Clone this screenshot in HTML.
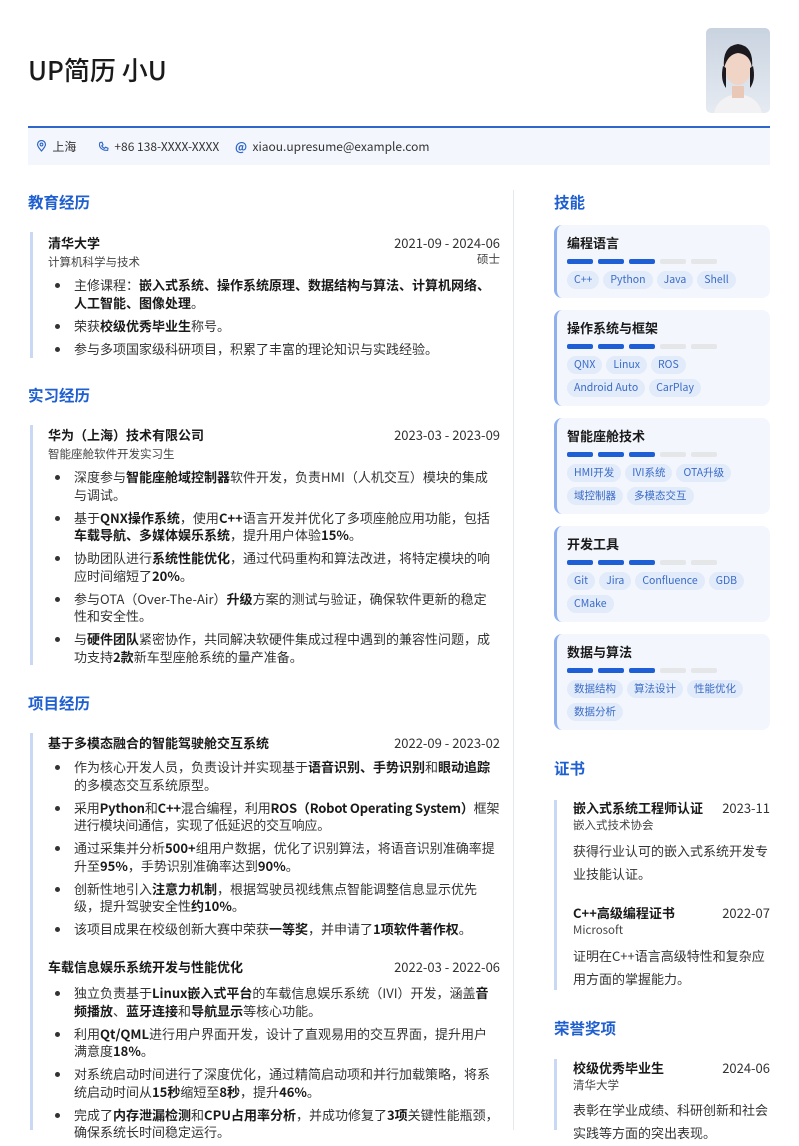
<!DOCTYPE html>
<html><head><meta charset="utf-8">
<style>
*{margin:0;padding:0;box-sizing:border-box}
body{width:799px;height:1130px;overflow:hidden;background:#fff;font-family:"Noto Sans CJK SC","Liberation Sans",sans-serif;color:#333;position:relative}
.a{position:absolute}
.name{left:28px;top:53px;font-size:26px;color:#1a1a1a;line-height:34px;font-weight:500}
.photo{left:706px;top:28px;width:64px;height:85px;border-radius:5px;background:linear-gradient(180deg,#c9d3e0,#e6ebf2);overflow:hidden}
.line{left:28px;top:126px;width:742px;height:2px;background:#2f66c9}
.contact{left:28px;top:128px;width:742px;height:37px;background:#f3f6fc;font-size:12px;color:#333;line-height:37px}
.contact>span{position:absolute;top:0}
.sec{font-size:15.5px;color:#1f5fcf;font-weight:bold;line-height:20px}
.vdiv{left:513px;top:190px;width:1px;height:940px;background:#e6e8ec}
.bar{width:3px;background:#c9d8f5}
.h{font-size:13px;font-weight:bold;color:#1a1a1a;line-height:18px}
.d{font-size:13px;color:#333;line-height:18px;text-align:right}
.s{font-size:11.5px;color:#444;line-height:16px}
ul{list-style:none}
li{position:relative;font-size:13px;line-height:17.5px;color:#333;white-space:nowrap;margin-bottom:5.5px}
li:before{content:"";position:absolute;left:-19px;top:7px;width:5px;height:5px;border-radius:50%;background:#333}
b{color:#1a1a1a}
.card{left:554px;width:216px;background:#f3f6fd;border-radius:8px;border-left:3px solid #8eb0ee}
.ct{position:absolute;left:10px;top:9px;font-size:13px;font-weight:bold;color:#1a1a1a;line-height:18px}
.lv{position:absolute;left:10px;top:34px;height:5px}
.lv i{display:inline-block;width:26px;height:5px;margin-right:5px;border-radius:2px;background:#e5e6e8;vertical-align:top}
.lv i.on{background:#1f5fd6}
.tags{position:absolute;left:10px;top:46px;width:200px;line-height:0}
.tags span{display:inline-block;font-size:10.5px;color:#3a6bc7;background:#e2ebfa;border-radius:9px;height:18px;line-height:18px;padding:0 7px;margin:0 4px 5px 0}
.cd{font-size:13px;color:#333;line-height:23px}
</style></head><body>

<div class="a name">UP简历 小U</div>
<div class="a photo"><svg width="64" height="85" viewBox="0 0 64 85"><path d="M8 85 Q12 68 32 66 Q52 68 56 85Z" fill="#f2f2f4"/><path d="M26 58 L38 58 L38 70 L26 70Z" fill="#e9c8b8"/><ellipse cx="32" cy="40" rx="13" ry="17" fill="#f0d4c6"/><path d="M18 40 Q16 18 32 16 Q48 18 46 40 Q44 26 32 25 Q22 26 18 40Z" fill="#1c1a1e"/><path d="M17 38 Q14 52 20 60 L20 40Z" fill="#1c1a1e"/><path d="M47 38 Q50 52 44 60 L44 40Z" fill="#1c1a1e"/></svg></div>
<div class="a line"></div>
<div class="a contact">
<span style="left:8px"><svg width="11" height="12" viewBox="0 0 11 12" style="vertical-align:-1px"><path d="M5.5 11 C2 7 1.5 5.5 1.5 4.5 A4 4 0 0 1 9.5 4.5 C9.5 5.5 9 7 5.5 11Z" fill="none" stroke="#2f66c9" stroke-width="1.2"/><circle cx="5.5" cy="4.5" r="1.4" fill="none" stroke="#2f66c9" stroke-width="1.1"/></svg>&nbsp; 上海</span>
<span style="left:70px"><svg width="11" height="11" viewBox="0 0 11 11" style="vertical-align:-1px"><path d="M2 1.5 L4 1.2 L5 3.8 L3.8 4.8 Q5 7 6.5 7.4 L7.5 6.2 L10 7.2 L9.7 9.3 Q5 9.8 2.3 6.5 Q0.8 4 2 1.5Z" fill="none" stroke="#2f66c9" stroke-width="1.1"/></svg>&nbsp; +86 138-XXXX-XXXX</span>
<span style="left:207px"><b style="color:#2f66c9">@</b>&nbsp; xiaou.upresume@example.com</span>
</div>

<div class="a vdiv"></div>

<div class="a sec" style="left:28px;top:192px">教育经历</div>
<div class="a bar" style="left:30px;top:232px;height:126px"></div>
<div class="a h" style="left:48px;top:234px">清华大学</div>
<div class="a d" style="right:299px;top:234px">2021-09 - 2024-06</div>
<div class="a s" style="left:48px;top:254px">计算机科学与技术</div>
<div class="a s" style="right:299px;top:251px">硕士</div>
<ul class="a" style="left:74px;top:276px">
<li>主修课程：<b>嵌入式系统、操作系统原理、数据结构与算法、计算机网络、<br>人工智能、图像处理</b>。</li>
<li>荣获<b>校级优秀毕业生</b>称号。</li>
<li>参与多项国家级科研项目，积累了丰富的理论知识与实践经验。</li>
</ul>

<div class="a sec" style="left:28px;top:385px">实习经历</div>
<div class="a bar" style="left:30px;top:425px;height:240px"></div>
<div class="a h" style="left:48px;top:426px">华为（上海）技术有限公司</div>
<div class="a d" style="right:299px;top:426px">2023-03 - 2023-09</div>
<div class="a s" style="left:48px;top:446px">智能座舱软件开发实习生</div>
<ul class="a" style="left:74px;top:468px">
<li>深度参与<b>智能座舱域控制器</b>软件开发，负责HMI（人机交互）模块的集成<br>与调试。</li>
<li>基于<b>QNX操作系统</b>，使用<b>C++</b>语言开发并优化了多项座舱应用功能，包括<br><b>车载导航、多媒体娱乐系统</b>，提升用户体验<b>15%</b>。</li>
<li>协助团队进行<b>系统性能优化</b>，通过代码重构和算法改进，将特定模块的响<br>应时间缩短了<b>20%</b>。</li>
<li>参与OTA（Over-The-Air）<b>升级</b>方案的测试与验证，确保软件更新的稳定<br>性和安全性。</li>
<li>与<b>硬件团队</b>紧密协作，共同解决软硬件集成过程中遇到的兼容性问题，成<br>功支持<b>2款</b>新车型座舱系统的量产准备。</li>
</ul>

<div class="a sec" style="left:28px;top:693px">项目经历</div>
<div class="a bar" style="left:30px;top:733px;height:397px"></div>
<div class="a h" style="left:48px;top:734px">基于多模态融合的智能驾驶舱交互系统</div>
<div class="a d" style="right:299px;top:734px">2022-09 - 2023-02</div>
<ul class="a" style="left:74px;top:758px">
<li>作为核心开发人员，负责设计并实现基于<b>语音识别、手势识别</b>和<b>眼动追踪</b><br>的多模态交互系统原型。</li>
<li style="letter-spacing:-0.2px">采用<b>Python</b>和<b>C++</b>混合编程，利用<b>ROS（Robot Operating System）</b>框架<br>进行模块间通信，实现了低延迟的交互响应。</li>
<li>通过采集并分析<b>500+</b>组用户数据，优化了识别算法，将语音识别准确率提<br>升至<b>95%</b>，手势识别准确率达到<b>90%</b>。</li>
<li>创新性地引入<b>注意力机制</b>，根据驾驶员视线焦点智能调整信息显示优先<br>级，提升驾驶安全性<b>约10%</b>。</li>
<li>该项目成果在校级创新大赛中荣获<b>一等奖</b>，并申请了<b>1项软件著作权</b>。</li>
</ul>
<div class="a h" style="left:48px;top:958px">车载信息娱乐系统开发与性能优化</div>
<div class="a d" style="right:299px;top:958px">2022-03 - 2022-06</div>
<ul class="a" style="left:74px;top:984px">
<li>独立负责基于<b>Linux嵌入式平台</b>的车载信息娱乐系统（IVI）开发，涵盖<b>音<br>频播放</b>、<b>蓝牙连接</b>和<b>导航显示</b>等核心功能。</li>
<li>利用<b>Qt/QML</b>进行用户界面开发，设计了直观易用的交互界面，提升用户<br>满意度<b>18%</b>。</li>
<li>对系统启动时间进行了深度优化，通过精简启动项和并行加载策略，将系<br>统启动时间从<b>15秒</b>缩短至<b>8秒</b>，提升<b>46%</b>。</li>
<li>完成了<b>内存泄漏检测</b>和<b>CPU占用率分析</b>，并成功修复了<b>3项</b>关键性能瓶颈，<br>确保系统长时间稳定运行。</li>
</ul>

<div class="a sec" style="left:554px;top:192px">技能</div>
<div class="a card" style="top:225px;height:73px"><div class="ct">编程语言</div><div class="lv"><i class="on"></i><i class="on"></i><i class="on"></i><i></i><i></i></div><div class="tags"><span>C++</span><span>Python</span><span>Java</span><span>Shell</span></div></div>
<div class="a card" style="top:310px;height:96px"><div class="ct">操作系统与框架</div><div class="lv"><i class="on"></i><i class="on"></i><i class="on"></i><i></i><i></i></div><div class="tags"><span>QNX</span><span>Linux</span><span>ROS</span><br><span>Android Auto</span><span>CarPlay</span></div></div>
<div class="a card" style="top:418px;height:96px"><div class="ct">智能座舱技术</div><div class="lv"><i class="on"></i><i class="on"></i><i class="on"></i><i></i><i></i></div><div class="tags"><span>HMI开发</span><span>IVI系统</span><span>OTA升级</span><br><span>域控制器</span><span>多模态交互</span></div></div>
<div class="a card" style="top:526px;height:96px"><div class="ct">开发工具</div><div class="lv"><i class="on"></i><i class="on"></i><i class="on"></i><i></i><i></i></div><div class="tags"><span>Git</span><span>Jira</span><span>Confluence</span><span>GDB</span><br><span>CMake</span></div></div>
<div class="a card" style="top:634px;height:96px"><div class="ct">数据与算法</div><div class="lv"><i class="on"></i><i class="on"></i><i class="on"></i><i></i><i></i></div><div class="tags"><span>数据结构</span><span>算法设计</span><span>性能优化</span><br><span>数据分析</span></div></div>

<div class="a sec" style="left:554px;top:758px">证书</div>
<div class="a bar" style="left:554px;top:800px;height:190px"></div>
<div class="a h" style="left:573px;top:799px">嵌入式系统工程师认证</div>
<div class="a d" style="right:29px;top:799px">2023-11</div>
<div class="a s" style="left:573px;top:817px">嵌入式技术协会</div>
<div class="a cd" style="left:573px;top:839px">获得行业认可的嵌入式系统开发专<br>业技能认证。</div>
<div class="a h" style="left:573px;top:904px">C++高级编程证书</div>
<div class="a d" style="right:29px;top:904px">2022-07</div>
<div class="a s" style="left:573px;top:922px">Microsoft</div>
<div class="a cd" style="left:573px;top:944px">证明在C++语言高级特性和复杂应<br>用方面的掌握能力。</div>

<div class="a sec" style="left:554px;top:1018px">荣誉奖项</div>
<div class="a bar" style="left:554px;top:1059px;height:71px"></div>
<div class="a h" style="left:573px;top:1059px">校级优秀毕业生</div>
<div class="a d" style="right:29px;top:1059px">2024-06</div>
<div class="a s" style="left:573px;top:1077px">清华大学</div>
<div class="a cd" style="left:573px;top:1098px">表彰在学业成绩、科研创新和社会<br>实践等方面的突出表现。</div>

</body></html>
